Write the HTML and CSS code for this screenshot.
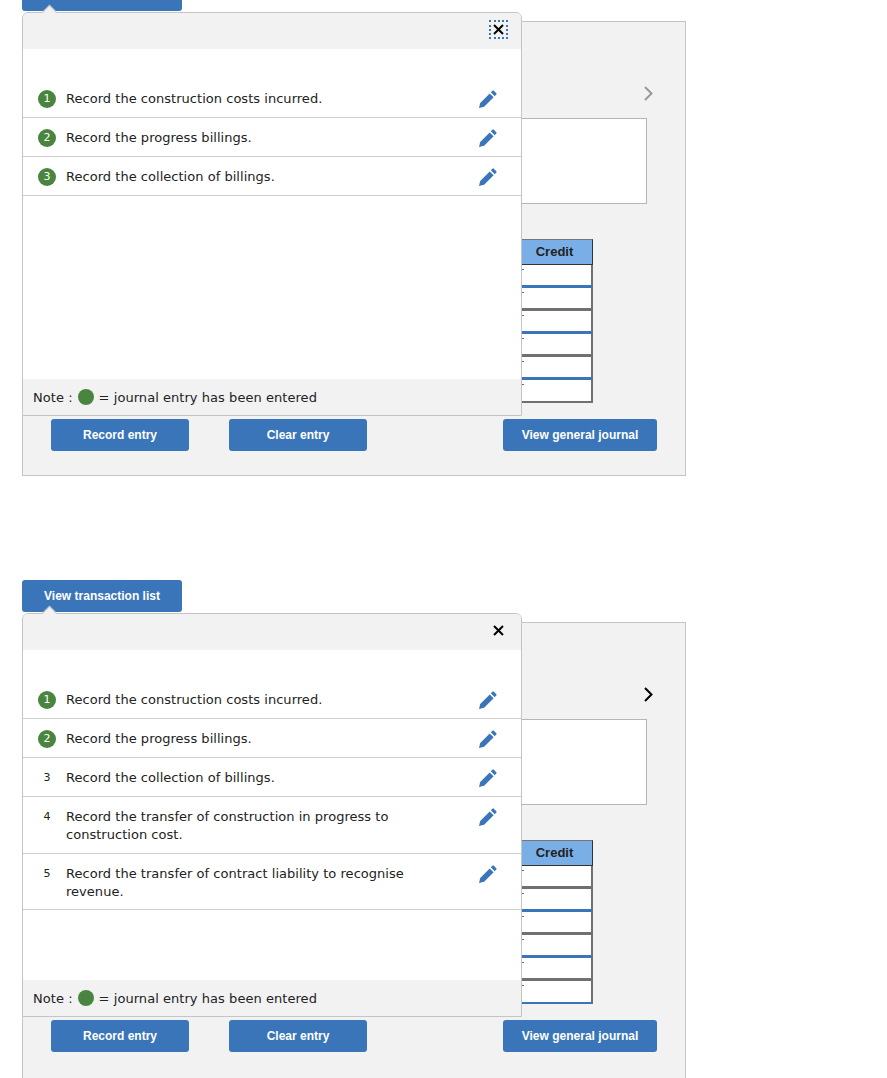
FILE: index.html
```html
<!DOCTYPE html>
<html lang="en">
<head>
    <meta charset="UTF-8">
    <meta name="viewport" content="width=device-width, initial-scale=1.0">
    <title>Journal entry worksheet</title>
    <link rel="stylesheet" href="styles.css">
</head>
<body>
    <svg class="icon-defs" width="0" height="0" aria-hidden="true">
        <symbol id="pencil" viewBox="0 0 18 18">
            <path d="M0 18 L1.2 12.9 L10.7 3.4 L14.6 7.3 L5.1 16.8 Z"/>
            <path d="M11.8 2.3 L13.4 0.7 Q14.1 0 14.8 0.7 L17.3 3.2 Q18 3.9 17.3 4.6 L15.7 6.2 Z"/>
        </symbol>
    </svg>

    <div class="page">
        <section class="exercise">
            <!-- only the bottom edge of this button is on screen -->
            <button class="btn btn-list" aria-label="View transaction list"></button>

            <div class="panel">
                <div class="pager">
                    <svg class="chevron chevron-off" viewBox="0 0 9 15"><path d="M1 1 L7.5 7.5 L1 14"/></svg>
                </div>
                <div class="entry-box"></div>
                <table class="journal">
                    <thead><tr><th>Credit</th></tr></thead>
                    <tbody>
                        <tr class="line-blue"><td></td></tr>
                        <tr class="line-grey"><td></td></tr>
                        <tr class="line-blue"><td></td></tr>
                        <tr class="line-grey"><td></td></tr>
                        <tr class="line-blue"><td></td></tr>
                        <tr class="line-grey line-end"><td></td></tr>
                    </tbody>
                </table>
                <div class="actions">
                    <button class="btn">Record entry</button>
                    <button class="btn">Clear entry</button>
                    <button class="btn btn-journal">View general journal</button>
                </div>
            </div>

            <div class="popup">
                <span class="popup-caret"></span>
                <div class="popup-head">
                    <button class="close close-focus">
                        <svg viewBox="0 0 11 11"><path d="M1 1 L10 10 M10 1 L1 10"/></svg>
                    </button>
                </div>
                <ul class="tasks">
                    <li class="task">
                        <span class="num done">1</span>
                        <span class="task-text">Record the construction costs incurred.</span>
                        <svg class="pencil"><use href="#pencil"/></svg>
                    </li>
                    <li class="task">
                        <span class="num done">2</span>
                        <span class="task-text">Record the progress billings.</span>
                        <svg class="pencil"><use href="#pencil"/></svg>
                    </li>
                    <li class="task">
                        <span class="num done">3</span>
                        <span class="task-text">Record the collection of billings.</span>
                        <svg class="pencil"><use href="#pencil"/></svg>
                    </li>
                </ul>
                <div class="note">Note : <span class="dot"></span> = journal entry has been entered</div>
            </div>
        </section>

        <section class="exercise">
            <button class="btn btn-list">View transaction list</button>

            <div class="panel panel-cut">
                <div class="pager">
                    <svg class="chevron" viewBox="0 0 9 15"><path d="M1 1 L7.5 7.5 L1 14"/></svg>
                </div>
                <div class="entry-box"></div>
                <table class="journal">
                    <thead><tr><th>Credit</th></tr></thead>
                    <tbody>
                        <tr class="line-grey"><td></td></tr>
                        <tr class="line-blue"><td></td></tr>
                        <tr class="line-grey"><td></td></tr>
                        <tr class="line-blue"><td></td></tr>
                        <tr class="line-grey"><td></td></tr>
                        <tr class="line-blue line-end"><td></td></tr>
                    </tbody>
                </table>
                <div class="actions">
                    <button class="btn">Record entry</button>
                    <button class="btn">Clear entry</button>
                    <button class="btn btn-journal">View general journal</button>
                </div>
            </div>

            <div class="popup">
                <span class="popup-caret"></span>
                <div class="popup-head">
                    <button class="close">
                        <svg viewBox="0 0 11 11"><path d="M1 1 L10 10 M10 1 L1 10"/></svg>
                    </button>
                </div>
                <ul class="tasks">
                    <li class="task">
                        <span class="num done">1</span>
                        <span class="task-text">Record the construction costs incurred.</span>
                        <svg class="pencil"><use href="#pencil"/></svg>
                    </li>
                    <li class="task">
                        <span class="num done">2</span>
                        <span class="task-text">Record the progress billings.</span>
                        <svg class="pencil"><use href="#pencil"/></svg>
                    </li>
                    <li class="task">
                        <span class="num">3</span>
                        <span class="task-text">Record the collection of billings.</span>
                        <svg class="pencil"><use href="#pencil"/></svg>
                    </li>
                    <li class="task">
                        <span class="num">4</span>
                        <span class="task-text">Record the transfer of construction in progress to construction cost.</span>
                        <svg class="pencil"><use href="#pencil"/></svg>
                    </li>
                    <li class="task task-last">
                        <span class="num">5</span>
                        <span class="task-text">Record the transfer of contract liability to recognise revenue.</span>
                        <svg class="pencil"><use href="#pencil"/></svg>
                    </li>
                </ul>
                <div class="note">Note : <span class="dot"></span> = journal entry has been entered</div>
            </div>
        </section>
    </div>
</body>
</html>
```

FILE: styles.css
```css
html, body {
    margin: 0;
    height: 100vh;
    overflow: hidden;
    background-color: white;
}

body {
    font-family: "DejaVu Sans", Verdana, sans-serif;
    font-size: 13px;
    color: #222;
}

.icon-defs {
    position: absolute;
}

.page {
    margin-top: -21px;
    padding-left: 22px;
}

.exercise {
    position: relative;
    width: 664px;
    margin-bottom: 104px;
}

.btn {
    display: block;
    width: 138px;
    height: 32px;
    padding: 0;
    border: none;
    border-radius: 3px;
    background-color: #3a75b9;
    color: white;
    font-family: "Liberation Sans", Arial, sans-serif;
    font-size: 12px;
    font-weight: bold;
}

.btn-list {
    width: 160px;
}

.btn-journal {
    width: 154px;
    margin-left: auto;
}

.panel {
    box-sizing: border-box;
    height: 455px;
    margin-top: 10px;
    padding: 0 28px 24px;
    border: 1px solid #c4c4c4;
    background-color: #f2f2f2;
}

.panel-cut {
    height: 520px;
}

.pager {
    display: flex;
    justify-content: flex-end;
    height: 15px;
    padding-top: 64px;
    margin-right: 4px;
}

.chevron {
    width: 9px;
    height: 15px;
    fill: none;
    stroke: black;
    stroke-width: 2;
}

.chevron-off {
    stroke: #999;
}

.entry-box {
    box-sizing: border-box;
    width: 400px;
    height: 86px;
    margin: 17px 10px 0 auto;
    border: 1px solid #b5b5b5;
    background-color: white;
}

.journal {
    width: 76px;
    margin: 35px 64px 0 auto;
    border-collapse: separate;
    border-spacing: 0;
    table-layout: fixed;
}

.journal th {
    box-sizing: border-box;
    height: 26px;
    padding: 0 0 2px;
    border-top: 1px solid #777;
    border-right: 1px solid #333;
    border-bottom: 1px solid #333;
    background-color: #7aaee6;
    font-family: "Liberation Sans", Arial, sans-serif;
    font-size: 13px;
    font-weight: bold;
    color: #222;
}

.journal td {
    position: relative;
    box-sizing: border-box;
    height: 23px;
    padding: 0;
    border-right: 2px solid #6f7070;
    background-color: white;
}

.journal td::before {
    content: "";
    position: absolute;
    top: 4px;
    left: 5px;
    width: 2px;
    height: 1px;
    background-color: #3a75b9;
}

.line-blue td {
    border-bottom: 3px solid #3a75b9;
}

.line-grey td {
    border-bottom: 3px solid #6f7070;
}

.line-end td {
    border-bottom-width: 2px;
}

.actions {
    display: flex;
    gap: 40px;
    margin-top: 16px;
}

.popup {
    position: absolute;
    top: 33px;
    left: 0;
    box-sizing: border-box;
    display: flex;
    flex-direction: column;
    width: 500px;
    height: 404px;
    border: 1px solid #c4c4c4;
    border-top-left-radius: 6px;
    border-top-right-radius: 6px;
    background-color: white;
}

.popup-caret {
    position: absolute;
    top: -6px;
    left: 21px;
    width: 10px;
    height: 10px;
    border-top: 1px solid #c4c4c4;
    border-left: 1px solid #c4c4c4;
    background-color: #f2f2f2;
    transform: rotate(45deg);
}

.popup-head {
    box-sizing: border-box;
    display: flex;
    justify-content: flex-end;
    align-items: center;
    height: 36px;
    padding: 0 13px 3px 0;
    border-radius: 5px 5px 0 0;
    background-color: #f2f2f2;
}

.close {
    display: flex;
    align-items: center;
    justify-content: center;
    box-sizing: border-box;
    width: 19px;
    height: 19px;
    padding: 0;
    border: 2px solid transparent;
    background: none;
}

.close-focus {
    border: 2px dotted #3a75b9;
}

.close svg {
    width: 11px;
    height: 11px;
    fill: none;
    stroke: black;
    stroke-width: 2;
}

.tasks {
    flex: 1;
    margin: 0;
    padding: 30px 0 0;
    list-style: none;
}

.task {
    display: flex;
    align-items: flex-start;
    padding: 11px 24px 9px 15px;
    border-bottom: 1px solid #cfcfcf;
    line-height: 18px;
}

.task-last {
    padding-bottom: 8px;
}

.task-text {
    width: 350px;
    margin-left: 10px;
    margin-right: auto;
    letter-spacing: 0.03px;
}

.num {
    flex: none;
    width: 18px;
    height: 18px;
    border-radius: 50%;
    font-size: 11px;
    text-align: center;
}

.num.done {
    background-color: #4a8540;
    color: white;
}

.pencil {
    flex: none;
    width: 18px;
    height: 18px;
    fill: #3a75b9;
}

.note {
    display: flex;
    align-items: center;
    gap: 5px;
    height: 36px;
    padding-left: 10px;
    background-color: #f2f2f2;
    letter-spacing: 0.05px;
}

.dot {
    width: 16px;
    height: 16px;
    border-radius: 50%;
    background-color: #4a8540;
}
```
